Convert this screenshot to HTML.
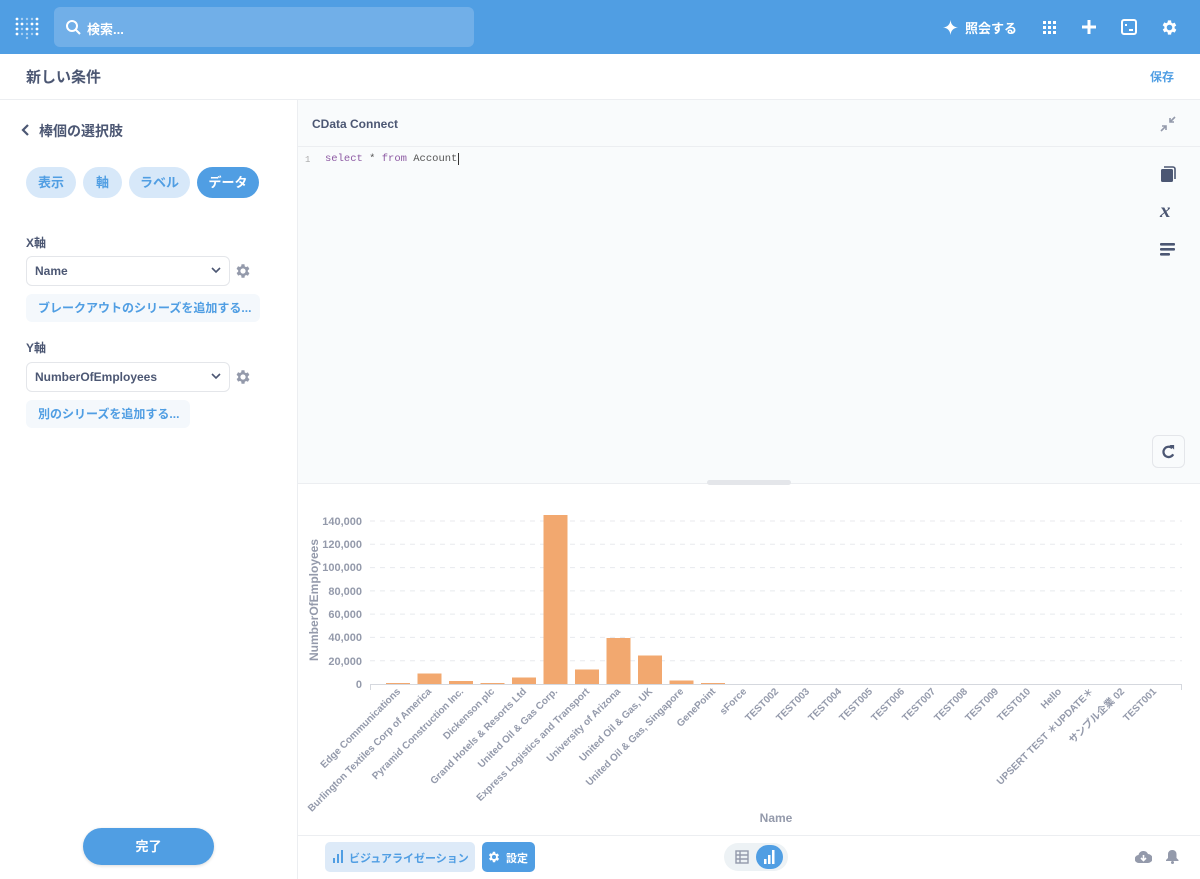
<!DOCTYPE html>
<html><head><meta charset="utf-8"><style>
*{box-sizing:border-box;margin:0;padding:0}
body{width:1200px;height:879px;overflow:hidden;font-family:"Liberation Sans","Noto Sans CJK JP",sans-serif;background:#fff;position:relative;color:#4c5773}
.abs{position:absolute}
.top{left:0;top:0;width:1200px;height:54px;background:#509ee3}
.search{left:54px;top:7px;width:420px;height:40px;background:#74b0e8;border-radius:6px;opacity:.9}
.hdr{left:0;top:54px;width:1200px;height:46px;border-bottom:1px solid #eceef1;background:#fff}
.side{left:0;top:100px;width:298px;height:779px;border-right:1px solid #eceef1;background:#fff}
.editor{left:298px;top:100px;width:902px;height:384px;background:#f9fbfc;border-bottom:1px solid #eceef1}
.pill{top:167px;height:31px;border-radius:16px;background:#d7e8f9;color:#509ee3;font-size:13px;font-weight:bold;line-height:31px;text-align:center}
.lbl{font-size:12px;font-weight:bold;color:#4c5773}
.sel{width:204px;height:30px;border:1px solid #e4e6ea;border-radius:6px;font-size:12px;font-weight:bold;line-height:28px;padding-left:8px;color:#4c5773;background:#fff}
.add{height:28px;background:#f4f8fc;border-radius:6px;color:#509ee3;font-size:12px;font-weight:bold;line-height:28px;padding-left:12px}
.bot{left:298px;top:835px;width:902px;height:44px;border-top:1px solid #eceef1;background:#fff}
</style></head><body>
<div class="abs top"></div>
<svg class="abs" style="left:15px;top:16px" width="24" height="24" viewBox="0 0 24 24" fill="#fff">
<g><circle cx="2" cy="3" r="1.4"/><circle cx="2" cy="8" r="1.4"/><circle cx="2" cy="13" r="1.4"/><circle cx="2" cy="18" r="1.4"/><circle cx="7" cy="8" r="1.4"/><circle cx="12" cy="13" r="1.4"/><circle cx="17" cy="8" r="1.4"/><circle cx="22" cy="3" r="1.4"/><circle cx="22" cy="8" r="1.4"/><circle cx="22" cy="13" r="1.4"/><circle cx="22" cy="18" r="1.4"/></g>
<g opacity=".5"><circle cx="7" cy="3" r="1.2"/><circle cx="12" cy="3" r="1.2"/><circle cx="17" cy="3" r="1.2"/><circle cx="7" cy="13" r="1.2"/><circle cx="12" cy="8" r="1.2"/><circle cx="17" cy="13" r="1.2"/><circle cx="7" cy="18" r="1.2"/><circle cx="12" cy="18" r="1.2"/><circle cx="17" cy="18" r="1.2"/><circle cx="12" cy="22" r="1.2"/></g></svg>
<div class="abs search"></div>
<svg class="abs" style="left:66px;top:20px" width="15" height="15" viewBox="0 0 15 15" fill="none" stroke="#fff" stroke-width="2"><circle cx="6" cy="6" r="5"/><path d="M10 10l4 4"/></svg>
<div class="abs" style="left:87px;top:19px;color:#fff;font-size:13px;font-weight:bold">検索...</div>
<svg class="abs" style="left:943px;top:20px" width="15" height="15" viewBox="0 0 16 16" fill="#fff"><path d="M8 0C8.6 5 11 7.4 16 8 11 8.6 8.6 11 8 16 7.4 11 5 8.6 0 8 5 7.4 7.4 5 8 0z"/></svg>
<div class="abs" style="left:965px;top:18px;color:#fff;font-size:13px;font-weight:bold">照会する</div>
<svg class="abs" style="left:1043px;top:21px" width="13" height="13" viewBox="0 0 13 13" fill="#fff"><rect x="0" y="0" width="3" height="3"/><rect x="5" y="0" width="3" height="3"/><rect x="10" y="0" width="3" height="3"/><rect x="0" y="5" width="3" height="3"/><rect x="5" y="5" width="3" height="3"/><rect x="10" y="5" width="3" height="3"/><rect x="0" y="10" width="3" height="3"/><rect x="5" y="10" width="3" height="3"/><rect x="10" y="10" width="3" height="3"/></svg>
<svg class="abs" style="left:1081px;top:19px" width="16" height="16" viewBox="0 0 16 16"><path d="M8 1v14M1 8h14" stroke="#fff" stroke-width="3"/></svg>
<svg class="abs" style="left:1121px;top:19px" width="16" height="16" viewBox="0 0 16 16" fill="none" stroke="#fff" stroke-width="2"><rect x="1" y="1" width="14" height="14" rx="2"/><path d="M4 6h2M8 11h4"/></svg>
<svg class="abs" style="left:1160px;top:18px" width="19" height="19" viewBox="0 0 24 24" fill="#fff"><path d="M19.4 13a7.5 7.5 0 000-2l2.1-1.6-2-3.5-2.5 1a7.6 7.6 0 00-1.7-1L15 3h-4l-.4 2.6a7.6 7.6 0 00-1.7 1l-2.5-1-2 3.5L6.6 11a7.5 7.5 0 000 2l-2.1 1.6 2 3.5 2.5-1a7.6 7.6 0 001.7 1L11 21h4l.4-2.6a7.6 7.6 0 001.7-1l2.5 1 2-3.5zM13 15.5a3.5 3.5 0 110-7 3.5 3.5 0 010 7z" transform="translate(-1 0)"/></svg>

<div class="abs hdr"></div>
<div class="abs" style="left:26px;top:66px;font-size:15px;font-weight:bold;color:#4c5773">新しい条件</div>
<div class="abs" style="left:1150px;top:68px;font-size:12px;font-weight:bold;color:#509ee3">保存</div>

<div class="abs side"></div>
<svg class="abs" style="left:20px;top:123px" width="10" height="14" viewBox="0 0 10 14"><path d="M8 2L3 7l5 5" fill="none" stroke="#4c5773" stroke-width="2.2"/></svg>
<div class="abs" style="left:39px;top:121px;font-size:14px;font-weight:bold">棒個の選択肢</div>
<div class="abs pill" style="left:26px;width:50px">表示</div>
<div class="abs pill" style="left:83px;width:39px">軸</div>
<div class="abs pill" style="left:129px;width:61px">ラベル</div>
<div class="abs pill" style="left:197px;width:62px;background:#509ee3;color:#fff">データ</div>
<div class="abs lbl" style="left:26px;top:234px">X軸</div>
<div class="abs sel" style="left:26px;top:256px">Name</div>
<div class="abs lbl" style="left:26px;top:339px">Y軸</div>
<div class="abs sel" style="left:26px;top:362px">NumberOfEmployees</div>
<svg class="abs" style="left:211px;top:267px" width="10" height="7"><path d="M1 1l4 4 4-4" fill="none" stroke="#4c5773" stroke-width="1.6"/></svg>
<svg class="abs" style="left:211px;top:373px" width="10" height="7"><path d="M1 1l4 4 4-4" fill="none" stroke="#4c5773" stroke-width="1.6"/></svg>
<svg class="abs" style="left:234px;top:262px" width="18" height="18" viewBox="0 0 24 24" fill="#949aab"><path d="M19.4 13a7.5 7.5 0 000-2l2.1-1.6-2-3.5-2.5 1a7.6 7.6 0 00-1.7-1L15 3h-4l-.4 2.6a7.6 7.6 0 00-1.7 1l-2.5-1-2 3.5L6.6 11a7.5 7.5 0 000 2l-2.1 1.6 2 3.5 2.5-1a7.6 7.6 0 001.7 1L11 21h4l.4-2.6a7.6 7.6 0 001.7-1l2.5 1 2-3.5zM13 15.5a3.5 3.5 0 110-7 3.5 3.5 0 010 7z" transform="translate(-1 0)"/></svg>
<svg class="abs" style="left:234px;top:368px" width="18" height="18" viewBox="0 0 24 24" fill="#949aab"><path d="M19.4 13a7.5 7.5 0 000-2l2.1-1.6-2-3.5-2.5 1a7.6 7.6 0 00-1.7-1L15 3h-4l-.4 2.6a7.6 7.6 0 00-1.7 1l-2.5-1-2 3.5L6.6 11a7.5 7.5 0 000 2l-2.1 1.6 2 3.5 2.5-1a7.6 7.6 0 001.7 1L11 21h4l.4-2.6a7.6 7.6 0 001.7-1l2.5 1 2-3.5zM13 15.5a3.5 3.5 0 110-7 3.5 3.5 0 010 7z" transform="translate(-1 0)"/></svg>
<div class="abs add" style="left:26px;top:294px;width:234px">ブレークアウトのシリーズを追加する...</div>
<div class="abs add" style="left:26px;top:400px;width:164px">別のシリーズを追加する...</div>
<div class="abs" style="left:83px;top:828px;width:131px;height:37px;border-radius:19px;background:#509ee3;color:#fff;font-size:13px;font-weight:bold;text-align:center;line-height:37px;box-shadow:0 1px 3px rgba(0,0,0,.15)">完了</div>

<div class="abs editor"></div>
<div class="abs" style="left:298px;top:146px;width:902px;height:1px;background:#eceef1"></div>
<div class="abs" style="left:312px;top:117px;font-size:12px;font-weight:bold">CData Connect</div>
<svg class="abs" style="left:1160px;top:116px" width="16" height="16" viewBox="0 0 16 16"><path d="M1 15l5-5M2 10h4v4" stroke="#949aab" stroke-width="1.6" fill="none"/><path d="M15 1l-5 5M10 2v4h4" stroke="#949aab" stroke-width="1.6" fill="none"/></svg>
<div class="abs" style="left:305px;top:155px;font-family:'Liberation Mono',monospace;font-size:9px;color:#aaa">1</div>
<div class="abs" style="left:325px;top:153px;font-family:'Liberation Mono',monospace;font-size:10.5px;color:#555"><span style="color:#8d5aa3">select</span> * <span style="color:#8d5aa3">from</span> Account<span style="border-left:1px solid #333;margin-left:1px"></span></div>
<svg class="abs" style="left:1160px;top:166px" width="16" height="17" viewBox="0 0 16 17" fill="#4c5773"><rect x="1" y="3" width="12" height="13" rx="1.5"/><path d="M4 1h9a2 2 0 012 2v10" stroke="#4c5773" stroke-width="1.6" fill="none"/></svg>
<div class="abs" style="left:1160px;top:198px;font-family:'Liberation Serif',serif;font-style:italic;font-weight:bold;font-size:21px;color:#4c5773">x</div>
<svg class="abs" style="left:1160px;top:242px" width="16" height="15" fill="#4c5773"><rect x="0" y="1" width="15" height="2.6" rx="1"/><rect x="0" y="6" width="15" height="2.6" rx="1"/><rect x="0" y="11" width="10" height="2.6" rx="1"/></svg>
<div class="abs" style="left:1152px;top:435px;width:33px;height:33px;border:1px solid #e4e6ea;border-radius:6px;background:#f9fbfc"></div>
<svg class="abs" style="left:1161px;top:444px" width="15" height="15" viewBox="0 0 16 16"><path d="M12 4.5A5.5 5.5 0 1013 11" fill="none" stroke="#4c5773" stroke-width="2.4"/><path d="M9 1h5v5z" fill="#4c5773"/></svg>
<div class="abs" style="left:707px;top:480px;width:84px;height:5px;border-radius:3px;background:#e4e6ea"></div>

<svg class="abs" style="left:298px;top:485px" width="902" height="350" viewBox="298 485 902 350" font-family="Liberation Sans, Noto Sans CJK JP, sans-serif">
<g stroke="#e8eaee" stroke-dasharray="5 5">
<line x1="370" x2="1182" y1="521" y2="521"/><line x1="370" x2="1182" y1="544.3" y2="544.3"/><line x1="370" x2="1182" y1="567.6" y2="567.6"/><line x1="370" x2="1182" y1="590.9" y2="590.9"/><line x1="370" x2="1182" y1="614.1" y2="614.1"/><line x1="370" x2="1182" y1="637.4" y2="637.4"/><line x1="370" x2="1182" y1="660.7" y2="660.7"/></g>
<g font-size="11" font-weight="bold" fill="#949aab" text-anchor="end">
<text x="362" y="525">140,000</text><text x="362" y="548">120,000</text><text x="362" y="571">100,000</text><text x="362" y="595">80,000</text><text x="362" y="618">60,000</text><text x="362" y="641">40,000</text><text x="362" y="665">20,000</text><text x="362" y="688">0</text></g>
<text transform="translate(318 600) rotate(-90)" text-anchor="middle" font-size="12" font-weight="bold" fill="#949aab">NumberOfEmployees</text>
<g fill="#f2a86f">
<rect x="386" y="683" width="24" height="1"/>
<rect x="417.5" y="673.5" width="24" height="10.5"/>
<rect x="449" y="681" width="24" height="3"/>
<rect x="480.5" y="683" width="24" height="1"/>
<rect x="512" y="677.5" width="24" height="6.5"/>
<rect x="543.5" y="515" width="24" height="169"/>
<rect x="575" y="669.5" width="24" height="14.5"/>
<rect x="606.5" y="638" width="24" height="46"/>
<rect x="638" y="655.5" width="24" height="28.5"/>
<rect x="669.5" y="680.5" width="24" height="3.5"/>
<rect x="701" y="683" width="24" height="1"/>
</g>
<line x1="370" x2="1182" y1="684.5" y2="684.5" stroke="#d5d8de"/>
<line x1="370.5" x2="370.5" y1="684" y2="690" stroke="#d5d8de"/>
<line x1="1181.5" x2="1181.5" y1="684" y2="690" stroke="#d5d8de"/>
<g font-size="10" font-weight="bold" fill="#949aab" text-anchor="end">
<text transform="translate(401 692) rotate(-45)">Edge Communications</text>
<text transform="translate(432 692) rotate(-45)">Burlington Textiles Corp of America</text>
<text transform="translate(464 692) rotate(-45)">Pyramid Construction Inc.</text>
<text transform="translate(495 692) rotate(-45)">Dickenson plc</text>
<text transform="translate(527 692) rotate(-45)">Grand Hotels &amp; Resorts Ltd</text>
<text transform="translate(558 692) rotate(-45)">United Oil &amp; Gas Corp.</text>
<text transform="translate(590 692) rotate(-45)">Express Logistics and Transport</text>
<text transform="translate(621 692) rotate(-45)">University of Arizona</text>
<text transform="translate(653 692) rotate(-45)">United Oil &amp; Gas, UK</text>
<text transform="translate(684 692) rotate(-45)">United Oil &amp; Gas, Singapore</text>
<text transform="translate(716 692) rotate(-45)">GenePoint</text>
<text transform="translate(747 692) rotate(-45)">sForce</text>
<text transform="translate(779 692) rotate(-45)">TEST002</text>
<text transform="translate(810 692) rotate(-45)">TEST003</text>
<text transform="translate(842 692) rotate(-45)">TEST004</text>
<text transform="translate(873 692) rotate(-45)">TEST005</text>
<text transform="translate(905 692) rotate(-45)">TEST006</text>
<text transform="translate(936 692) rotate(-45)">TEST007</text>
<text transform="translate(968 692) rotate(-45)">TEST008</text>
<text transform="translate(999 692) rotate(-45)">TEST009</text>
<text transform="translate(1031 692) rotate(-45)">TEST010</text>
<text transform="translate(1062 692) rotate(-45)">Hello</text>
<text transform="translate(1094 692) rotate(-45)">UPSERT TEST ＊UPDATE＊</text>
<text transform="translate(1125 692) rotate(-45)">サンプル企業 02</text>
<text transform="translate(1157 692) rotate(-45)">TEST001</text>
</g>
<text x="776" y="822" text-anchor="middle" font-size="12" font-weight="bold" fill="#949aab">Name</text>
</svg>

<div class="abs bot"></div>
<div class="abs" style="left:325px;top:842px;width:150px;height:30px;border-radius:5px;background:#ddeaf8"></div>
<svg class="abs" style="left:333px;top:850px" width="10" height="13" fill="#509ee3"><rect x="0" y="8" width="2" height="5"/><rect x="4" y="4" width="2" height="9"/><rect x="8" y="0" width="2" height="13"/></svg>
<div class="abs" style="left:349px;top:850px;font-size:11px;font-weight:bold;color:#509ee3">ビジュアライゼーション</div>
<div class="abs" style="left:482px;top:842px;width:53px;height:30px;border-radius:5px;background:#509ee3"></div>
<svg class="abs" style="left:487px;top:850px" width="14" height="14" viewBox="0 0 24 24" fill="#fff"><path d="M19.4 13a7.5 7.5 0 000-2l2.1-1.6-2-3.5-2.5 1a7.6 7.6 0 00-1.7-1L15 3h-4l-.4 2.6a7.6 7.6 0 00-1.7 1l-2.5-1-2 3.5L6.6 11a7.5 7.5 0 000 2l-2.1 1.6 2 3.5 2.5-1a7.6 7.6 0 001.7 1L11 21h4l.4-2.6a7.6 7.6 0 001.7-1l2.5 1 2-3.5zM13 15.5a3.5 3.5 0 110-7 3.5 3.5 0 010 7z" transform="translate(-1 0)"/></svg>
<div class="abs" style="left:506px;top:850px;font-size:11px;font-weight:bold;color:#fff">設定</div>
<div class="abs" style="left:724px;top:843px;width:64px;height:28px;border-radius:14px;background:#edf2f5"></div>
<svg class="abs" style="left:735px;top:850px" width="14" height="14" fill="none" stroke="#949aab" stroke-width="1.4"><rect x="1" y="1" width="12" height="12"/><path d="M1 5h12M1 9h12M5 1v12"/></svg>
<div class="abs" style="left:756px;top:845px;width:27px;height:24px;border-radius:12px;background:#509ee3"></div>
<svg class="abs" style="left:764px;top:850px" width="11" height="14" fill="#fff"><rect x="0" y="9" width="2.5" height="5"/><rect x="4" y="5" width="2.5" height="9"/><rect x="8" y="0" width="2.5" height="14"/></svg>
<svg class="abs" style="left:1135px;top:850px" width="17" height="14" viewBox="0 0 17 14" fill="#949aab"><path d="M4 13a4 4 0 01-.5-8A5 5 0 0113 4a4.5 4.5 0 010 9z"/><path d="M8.5 5v5M6 8l2.5 2.5L11 8" stroke="#fff" stroke-width="1.6" fill="none"/></svg>
<svg class="abs" style="left:1166px;top:849px" width="13" height="15" viewBox="0 0 13 15" fill="#949aab"><path d="M6.5 1a4 4 0 014 4v4l2 2v1H0v-1l2-2V5a4 4 0 014.5-4z"/><circle cx="6.5" cy="13.5" r="1.5"/></svg>
</body></html>
